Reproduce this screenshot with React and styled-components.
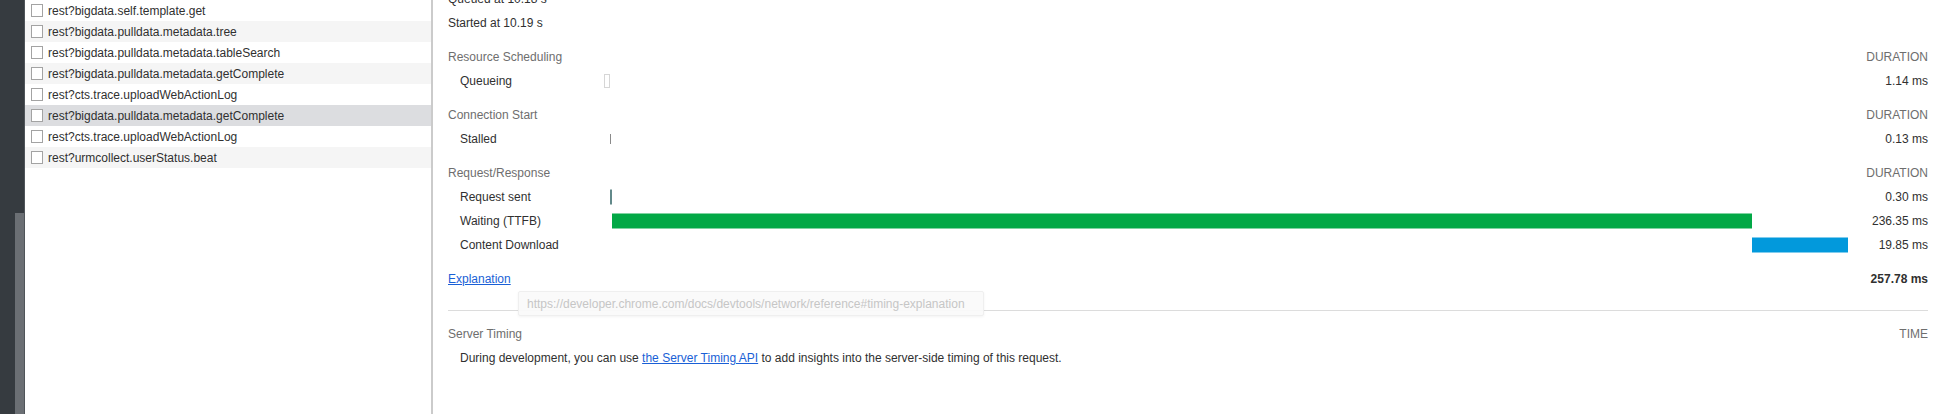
import React from "react";
import styled, { createGlobalStyle } from "styled-components";

const Global = createGlobalStyle`
  html, body { margin: 0; padding: 0; background: #fff; }
  body { width: 1944px; height: 414px; overflow: hidden; }
  * { box-sizing: border-box; }
`;

const Page = styled.div`
  display: flex;
  height: 414px;
  width: 1944px;
  overflow: hidden;
  font-family: "Liberation Sans", Arial, sans-serif;
  font-size: 12px;
  color: #303030;
`;

const Sidebar = styled.div`
  width: 25px;
  flex: none;
  display: flex;
  flex-direction: column;
  background: #363b40;
  border-right: 1px solid #50555a;
`;

const SidebarSpacer = styled.div`
  height: 213px;
  flex: none;
`;

const SidebarThumb = styled.div`
  flex: 1;
  margin-left: 15px;
  background: #6b6f74;
`;

const RequestList = styled.div`
  width: 408px;
  flex: none;
  border-right: 2px solid #cbcbcb;
  background: #fff;
`;

const rowBg = { odd: "#ffffff", even: "#f5f5f5", selected: "#dcdde0" };

const RequestRow = styled.div`
  height: 21px;
  display: flex;
  align-items: center;
  gap: 5px;
  padding-left: 6px;
  background: ${(p) => rowBg[p.$tone]};
  white-space: nowrap;
`;

const FileIcon = styled.span`
  width: 12px;
  height: 13px;
  flex: none;
  border: 1px solid #a3a3a3;
  background: #fff;
`;

const RequestName = styled.span`
  color: #303030;
`;

const Detail = styled.div`
  flex: 1;
  position: relative;
  padding: 0 16px 0 15px;
  overflow: hidden;
`;

const Table = styled.div`
  margin-top: -13px;
  display: flex;
  flex-direction: column;
`;

const Row = styled.div`
  display: grid;
  grid-template-columns: 156px 1fr 80px;
  height: 24px;
  align-items: center;
  margin-top: ${(p) => (p.$header ? "10px" : "0")};
`;

const Label = styled.div`
  padding-left: ${(p) => (p.$indent ? "12px" : "0")};
  color: ${(p) => (p.$muted ? "#6e6e6e" : "#303030")};
  white-space: nowrap;
  grid-column: ${(p) => (p.$span ? "1 / 3" : "auto")};
`;

const Value = styled.div`
  text-align: right;
  white-space: nowrap;
  color: ${(p) => (p.$muted ? "#6e6e6e" : "#303030")};
  font-weight: ${(p) => (p.$bold ? 700 : 400)};
  grid-column: 3;
`;

const Track = styled.div`
  position: relative;
  height: 24px;
`;

const barStyles = {
  queueing: "height: 14px; background: #fff; border: 1px solid #d6d6d6;",
  stalled: "height: 10px; background: #8a8a8a;",
  sending: "height: 15px; background: #62898a;",
  waiting: "height: 15px; background: #02a846;",
  download: "height: 15px; background: #0299dc;",
};

const Bar = styled.div`
  position: absolute;
  top: 50%;
  transform: translateY(-50%);
  ${(p) => barStyles[p.$kind]}
`;

const Link = styled.a`
  color: #1a5fd6;
  text-decoration: underline;
  cursor: pointer;
`;

const Separator = styled.div`
  height: 1px;
  background: #dcdcdc;
  margin: 19px 0 1px;
`;

const Paragraph = styled.div`
  height: 24px;
  display: flex;
  align-items: center;
  padding-left: 12px;
  white-space: nowrap;
  color: #303030;
`;

const Tooltip = styled.div`
  position: absolute;
  left: 85px;
  top: 291px;
  width: 466px;
  height: 25px;
  display: flex;
  align-items: center;
  padding: 0 8px;
  background: rgba(250, 250, 250, 0.92);
  border: 1px solid #efefef;
  border-radius: 2px;
  box-shadow: 0 1px 3px rgba(0, 0, 0, 0.05);
  color: #c6c6c6;
  white-space: nowrap;
`;

const requests = [
  "rest?bigdata.self.template.get",
  "rest?bigdata.pulldata.metadata.tree",
  "rest?bigdata.pulldata.metadata.tableSearch",
  "rest?bigdata.pulldata.metadata.getComplete",
  "rest?cts.trace.uploadWebActionLog",
  "rest?bigdata.pulldata.metadata.getComplete",
  "rest?cts.trace.uploadWebActionLog",
  "rest?urmcollect.userStatus.beat",
];

const TOTAL = 257.78;

const sections = [
  {
    title: "Resource Scheduling",
    items: [{ label: "Queueing", start: 0, dur: 1.14, kind: "queueing", text: "1.14 ms" }],
  },
  {
    title: "Connection Start",
    items: [{ label: "Stalled", start: 1.14, dur: 0.13, kind: "stalled", text: "0.13 ms" }],
  },
  {
    title: "Request/Response",
    items: [
      { label: "Request sent", start: 1.27, dur: 0.3, kind: "sending", text: "0.30 ms" },
      { label: "Waiting (TTFB)", start: 1.57, dur: 236.35, kind: "waiting", text: "236.35 ms" },
      { label: "Content Download", start: 237.92, dur: 19.85, kind: "download", text: "19.85 ms" },
    ],
  },
];

function TimingBar({ start, dur, kind }) {
  const left = (start / TOTAL) * 100;
  const width = (dur / TOTAL) * 100;
  return (
    <Bar
      $kind={kind}
      style={{ left: `${left}%`, width: `max(${kind === "sending" ? 2 : 1}px, ${width}%)` }}
    />
  );
}

export default function App() {
  return (
    <>
      <Global />
      <Page>
        <Sidebar>
          <SidebarSpacer />
          <SidebarThumb />
        </Sidebar>
        <RequestList>
          {requests.map((name, i) => (
            <RequestRow key={i} $tone={i === 5 ? "selected" : i % 2 ? "even" : "odd"}>
              <FileIcon />
              <RequestName>{name}</RequestName>
            </RequestRow>
          ))}
        </RequestList>
        <Detail>
          <Table>
            <Row>
              <Label $span>Queued at 10.18 s</Label>
            </Row>
            <Row>
              <Label $span>Started at 10.19 s</Label>
            </Row>
            {sections.map((s) => (
              <React.Fragment key={s.title}>
                <Row $header>
                  <Label $muted $span>{s.title}</Label>
                  <Value $muted>DURATION</Value>
                </Row>
                {s.items.map((it) => (
                  <Row key={it.label}>
                    <Label $indent>{it.label}</Label>
                    <Track>
                      <TimingBar start={it.start} dur={it.dur} kind={it.kind} />
                    </Track>
                    <Value>{it.text}</Value>
                  </Row>
                ))}
              </React.Fragment>
            ))}
            <Row $header>
              <Label $span>
                <Link>Explanation</Link>
              </Label>
              <Value $bold>257.78 ms</Value>
            </Row>
            <Separator />
            <Row $header>
              <Label $muted $span>Server Timing</Label>
              <Value $muted>TIME</Value>
            </Row>
            <Paragraph>
              During development, you can use&nbsp;<Link>the Server Timing API</Link>&nbsp;to add
              insights into the server-side timing of this request.
            </Paragraph>
          </Table>
          <Tooltip>https://developer.chrome.com/docs/devtools/network/reference#timing-explanation</Tooltip>
        </Detail>
      </Page>
    </>
  );
}
